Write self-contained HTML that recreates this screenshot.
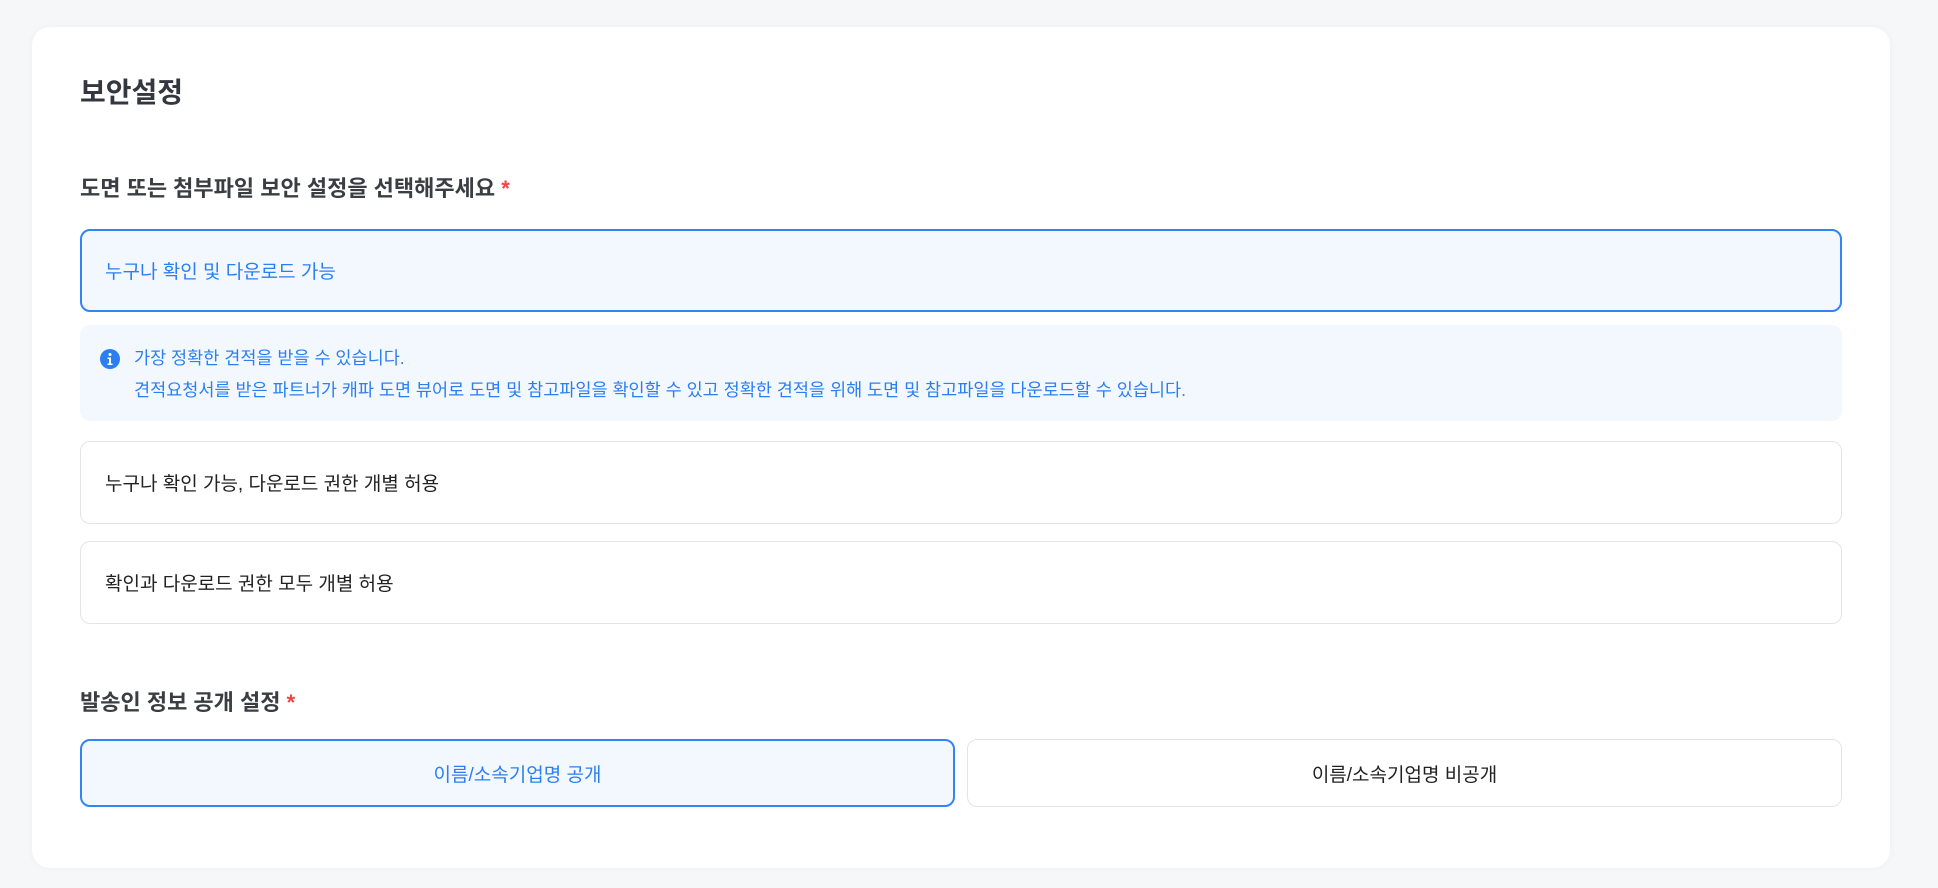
<!DOCTYPE html>
<html><head><meta charset="utf-8"><style>
*{box-sizing:border-box;margin:0;padding:0}
body{width:1938px;height:888px;background:#f6f7f9;font-family:"Liberation Sans","Noto Sans CJK KR",sans-serif;position:relative;overflow:hidden}
.card{position:absolute;left:32px;top:27px;width:1858px;height:841px;background:#fff;border-radius:18px;box-shadow:0 0 8px rgba(0,0,0,.04)}
.abs{position:absolute}
.title{left:48px;top:47px;font-size:28px;font-weight:700;color:#333840;line-height:38px}
.h{font-size:22px;font-weight:700;color:#3a3d42;line-height:30px}
.h span{color:#f04444}
.opt{position:absolute;left:48px;width:1762px;border:1px solid #e2e4e8;border-radius:10px;font-size:19px;color:#222;padding-left:24px;display:flex;align-items:center}
.opt.sel{border:2px solid #3185f5;background:#f3f8ff;color:#2b7ff2;padding-left:23px}
.info{position:absolute;left:48px;top:298px;width:1762px;height:96px;background:#f3f8ff;border-radius:10px;color:#2b7ff2;font-size:17.5px;line-height:32px;padding:17px 0 0 54px}
.info svg{position:absolute;left:20px;top:24px}
.btn{position:absolute;top:712px;height:68px;width:875px;border:1px solid #e2e4e8;border-radius:10px;font-size:19px;color:#222;display:flex;align-items:center;justify-content:center;background:#fff}
.btn.sel{border:2px solid #3185f5;background:#f3f8ff;color:#2b7ff2}
</style></head><body>
<div class="card">
<div class="abs title">보안설정</div>
<div class="abs h" style="left:48px;top:147px">도면 또는 첨부파일 보안 설정을 선택해주세요 <span>*</span></div>
<div class="opt sel" style="top:202px;height:83px">누구나 확인 및 다운로드 가능</div>
<div class="info"><svg width="20" height="20" viewBox="0 0 20 20"><circle cx="10" cy="10" r="10" fill="#2b7ff2"/><circle cx="10" cy="5.5" r="1.5" fill="#fff"/><path d="M7.5 8.5h3.5v6h1.5v1.5h-5v-1.5h1.5v-4.5h-1.5z" fill="#fff"/></svg>가장 정확한 견적을 받을 수 있습니다.<br>견적요청서를 받은 파트너가 캐파 도면 뷰어로 도면 및 참고파일을 확인할 수 있고 정확한 견적을 위해 도면 및 참고파일을 다운로드할 수 있습니다.</div>
<div class="opt" style="top:414px;height:83px">누구나 확인 가능, 다운로드 권한 개별 허용</div>
<div class="opt" style="top:514px;height:83px">확인과 다운로드 권한 모두 개별 허용</div>
<div class="abs h" style="left:48px;top:661px">발송인 정보 공개 설정 <span>*</span></div>
<div class="btn sel" style="left:48px">이름/소속기업명 공개</div>
<div class="btn" style="left:935px">이름/소속기업명 비공개</div>
</div>
</body></html>
